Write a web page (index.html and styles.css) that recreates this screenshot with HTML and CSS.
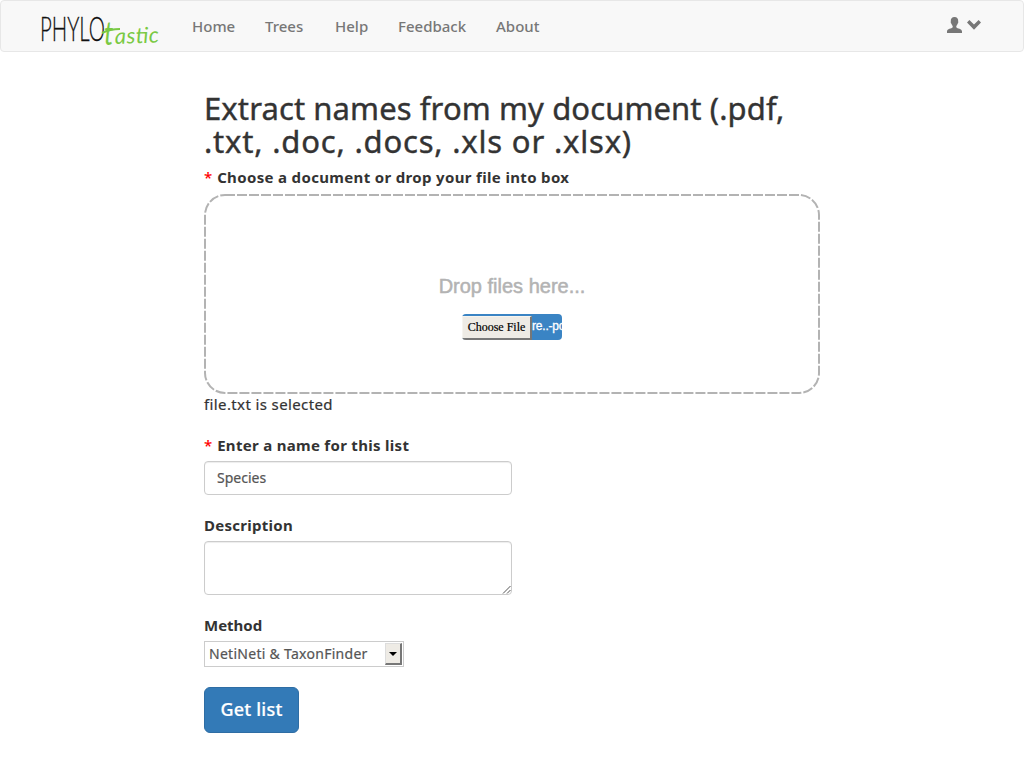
FILE: index.html
```html
<!DOCTYPE html>
<html lang="en">
<head>
<meta charset="utf-8">
<title>Phylotastic</title>
<link rel="stylesheet" href="styles.css">
</head>
<body>
<nav class="navbar">
  <a class="brand" aria-label="Phylotastic">
    <svg width="126" height="50" viewBox="0 0 126 50">
      <g class="brand-phylo">
        <text x="-1" y="40" textLength="65" lengthAdjust="spacingAndGlyphs">PHYLO</text>
      </g>
      <g class="brand-tastic">
        <text class="big-t" transform="translate(63 44) scale(.8 1)">t</text>
        <text transform="translate(74 43) rotate(-2)" textLength="44" lengthAdjust="spacing">astic</text>
        <path d="M61 32Q69 28 79 28"/>
      </g>
    </svg>
  </a>
  <ul class="menu">
    <li class="home">Home</li><li class="trees">Trees</li><li class="help">Help</li><li class="feedback">Feedback</li><li class="about">About</li>
  </ul>
  <div class="account">
    <svg width="36" height="18" viewBox="0 0 36 18">
      <path d="M8.5 1C5.9 1 4.6 2.8 4.8 5.4C4.5 6.2 5 7.4 5.5 7.8C5.8 9 6.3 9.6 6.7 10V11.2C5.7 12.8 1 12.5 1 15.5V17H16V15.5C16 12.5 11.3 12.8 10.3 11.2V10C10.8 9.6 11.3 9 11.5 7.8C12.1 7.4 12.5 6.2 12.2 5.4C12.4 2.8 11.1 1 8.5 1Z"/>
      <path d="M23.4 4L28 8.4L32.6 4L35 6.6L28 13.8L21 6.6Z"/>
    </svg>
  </div>
</nav>
<main class="content">
  <h1><span class="line-one">Extract names from my document (.pdf,</span><br><span class="line-two">.txt, .doc, .docs, .xls or .xlsx)</span></h1>
  <label class="label"><span class="required">*</span> <span class="choose">Choose a document or drop your file into box</span></label>
  <div class="dropzone">
    <svg class="outline" width="616" height="200"><rect x="1" y="1" width="614" height="198" rx="20"/></svg>
    <div class="hint">Drop files here...</div>
    <div class="picker"><span class="choose-file">Choose File</span><span class="clipped">re..-po</span></div>
  </div>
  <p class="selected">file.txt is selected</p>
  <label class="label label-name"><span class="required">*</span> <span class="enter">Enter a name for this list</span></label>
  <div class="field">Species</div>
  <label class="label label-next description">Description</label>
  <div class="field area"><svg class="grip" width="9" height="9"><path d="M1 8.5L8.5 1M5 8.5L8.5 5"/></svg></div>
  <label class="label label-next">Method</label>
  <div class="select"><span class="method">NetiNeti &amp; TaxonFinder</span><i class="arrow"></i></div>
  <button class="submit">Get list</button>
</main>
</body>
</html>
```
FILE: styles.css
```css
* { box-sizing: border-box; }
body { margin: 0; background: #fff; color: #333; font: 15px/20px "Noto Sans", "Open Sans", sans-serif; }
.navbar { height: 52px; display: flex; background: #f8f8f8; border: 1px solid #e7e7e7; border-radius: 4px; padding-left: 40px; }
.brand { width: 151px; }
.brand svg { display: block; overflow: visible; }
.brand-phylo { font: 300 33px Lato, sans-serif; fill: #111; stroke: #111; stroke-width: .3; }
.brand-tastic { font: italic 400 22px Lato, sans-serif; fill: #7ac943; }
.big-t { font-size: 33px; }
.brand-tastic path { fill: none; stroke: #7ac943; stroke-width: 2; }
.menu { display: flex; list-style: none; margin: 0; padding: 15px 0 0; color: #777; font-weight: 500; }
.menu li { white-space: nowrap; }
.home { width: 73px; }
.trees { width: 70px; }
.help { width: 63px; }
.feedback { width: 98px; }
.account { margin: 15px 41px 0 auto; }
.account svg { display: block; fill: #777; }
.content { width: 616px; margin: 40px auto 0; }
h1 { margin: 0; font-size: 31px; line-height: 33px; font-weight: 400; white-space: nowrap; -webkit-text-stroke: .4px #333; }
.line-one { letter-spacing: .1px; }
.line-two { letter-spacing: .8px; }
.label { display: block; font-weight: 700; line-height: 20px; height: 20px; white-space: nowrap; }
h1 + .label { margin: 9px 0 7px; }
.required { color: #f00; font-weight: 500; }
.required + span { margin-left: 1px; }
.choose { letter-spacing: .34px; }
.enter { letter-spacing: .3px; }
.description { letter-spacing: .27px; }
.dropzone { position: relative; height: 200px; padding-top: 80px; font-family: "Liberation Sans", Arial, sans-serif; text-align: center; }
.outline { position: absolute; left: 0; top: 0; fill: none; stroke: #b3b3b3; stroke-width: 2; stroke-dasharray: 10 2; }
.hint { font-size: 20px; line-height: 24px; color: #b3b3b3; -webkit-text-stroke: .5px #b3b3b3; }
.picker { display: flex; width: 100px; height: 26px; margin: 16px auto 0; padding: 2px 0 0; background: #3a84c4; border-radius: 4px; overflow: hidden; }
.choose-file { flex: none; width: 70px; height: 24px; background: #eeebe5; color: #000; border: 1px solid #f6f4ef; border-right: 2px solid #777; border-bottom: 2px solid #777; font: 12px/21px "Liberation Serif", serif; -webkit-text-stroke: .2px #000; }
.clipped { color: #fff; font-size: 12px; line-height: 20px; letter-spacing: -.2px; -webkit-text-stroke: .3px #fff; white-space: nowrap; }
.selected { margin: 0 0 21px; letter-spacing: .38px; -webkit-text-stroke: .2px #333; }
.field { width: 308px; height: 34px; margin-top: 6px; padding: 6px 12px; border: 1px solid #ccc; border-radius: 4px; box-shadow: inset 0 1px 1px rgba(0, 0, 0, .075); color: #555; font-size: 14px; -webkit-text-stroke: .2px #555; }
.area { position: relative; height: 54px; }
.grip { position: absolute; right: 0; bottom: 0; fill: none; stroke: #555; }
.label-next { margin-top: 20px; }
.select { display: flex; justify-content: space-between; width: 200px; height: 26px; margin-top: 6px; padding: 1px 0 1px 4px; border: 1px solid #ccc; color: #555; font-size: 14px; line-height: 21px; -webkit-text-stroke: .2px #555; }
.method { letter-spacing: .28px; }
.arrow { width: 17px; height: 22px; margin-right: 1px; background: #eeebe5; border: 1px solid #ddd; border-right: 2px solid #777; border-bottom: 2px solid #777; display: flex; align-items: center; justify-content: center; }
.arrow::before { content: ""; border: 4px solid transparent; border-top-color: #000; border-bottom: 0; }
.submit { display: block; width: 95px; height: 46px; margin-top: 20px; padding: 0 0 2px; background: #337ab7; border: 1px solid #2e6da4; border-radius: 6px; color: #fff; font: 500 18px/24px "Noto Sans", sans-serif; letter-spacing: .2px; -webkit-text-stroke: .2px #fff; }
```
